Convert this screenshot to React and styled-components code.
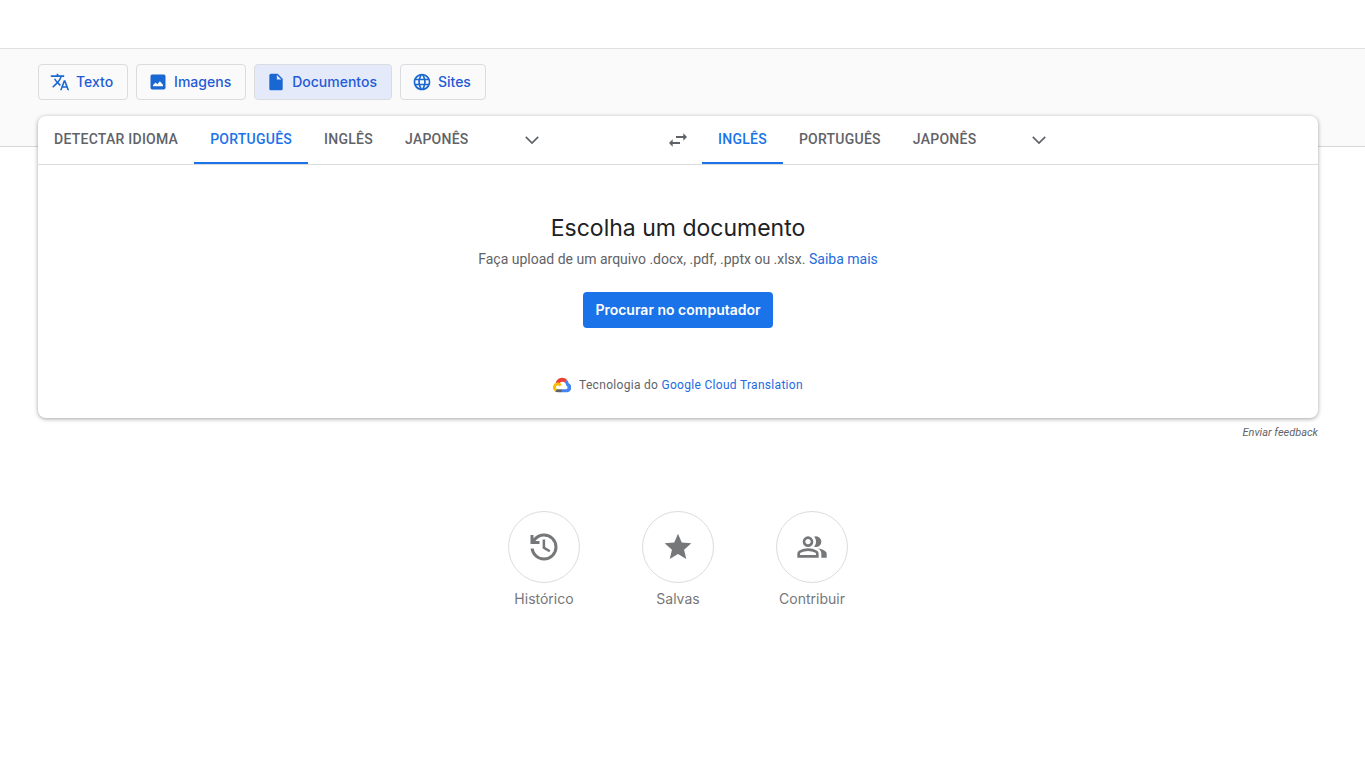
import React from "react";
import styled, { createGlobalStyle } from "styled-components";
import {
  MdTranslate,
  MdInsertDriveFile,
  MdLanguage,
  MdStar,
} from "react-icons/md";

const GlobalStyle = createGlobalStyle`
  * {
    box-sizing: border-box;
  }
  body {
    margin: 0;
    background-color: #ffffff;
    color: #5f6368;
    font-family: Roboto, Arial, Helvetica, sans-serif;
    font-size: 14px;
  }
  button {
    font-family: inherit;
    cursor: pointer;
  }
`;

const Header = styled.header`
  height: 48px;
`;

const Modes = styled.nav`
  display: flex;
  gap: 8px;
  height: 99px;
  padding: 15px 47px 0 38px;
  background-color: #fafafa;
  border-top: 1px solid #e0e0e0;
  border-bottom: 1px solid #d8d8d8;
`;

const ModeButton = styled.button`
  display: flex;
  align-items: center;
  gap: 6px;
  height: 36px;
  padding: 0 14px 0 11px;
  border: 1px solid #dadce0;
  border-radius: 4px;
  background-color: ${(props) => (props.$active ? "#e4eafa" : "transparent")};
  color: #1f5bd6;
  font-family: Inter, Roboto, sans-serif;
  font-size: 14px;
  font-weight: 500;
  line-height: 20px;
  svg {
    width: 20px;
    height: 20px;
    color: #1967d2;
  }
`;

const Main = styled.main`
  padding: 0 47px 0 38px;
  margin-top: -31px;
`;

const Card = styled.section`
  position: relative;
  background-color: #ffffff;
  border-radius: 8px;
  box-shadow: 0 1px 4px rgba(0, 0, 0, 0.37);
`;

const LanguageBar = styled.div`
  display: flex;
  height: 49px;
  border-bottom: 1px solid #dadce0;
`;

const Languages = styled.div`
  display: flex;
  flex: 1;
`;

const Tab = styled.button`
  height: 48px;
  padding: 0 16px;
  border: 0;
  border-bottom: 2px solid
    ${(props) => (props.$active ? "#1a73e8" : "transparent")};
  background: none;
  color: ${(props) => (props.$active ? "#1a73e8" : "#5f6368")};
  font-size: 14px;
  font-weight: 500;
  line-height: 20px;
  letter-spacing: 0.25px;
  white-space: nowrap;
`;

const IconButton = styled.button`
  display: flex;
  align-items: center;
  justify-content: center;
  width: 48px;
  height: 48px;
  padding: 0;
  border: 0;
  background: none;
  color: #5f6368;
  svg {
    width: 24px;
    height: 24px;
  }
`;

const MoreButton = styled(IconButton)`
  margin-left: 23px;
`;

const Upload = styled.div`
  display: flex;
  flex-direction: column;
  align-items: center;
  padding: 47px 16px 24px;
`;

const Title = styled.h1`
  margin: 0;
  color: #202124;
  font-family: Inter, Roboto, sans-serif;
  font-size: 23px;
  font-weight: 400;
  line-height: 32px;
`;

const Hint = styled.p`
  margin: 5px 0 23px;
  line-height: 20px;
`;

const Link = styled.a`
  color: #246bdf;
  text-decoration: none;
`;

const BrowseButton = styled.button`
  height: 36px;
  padding: 0 12px;
  border: 0;
  border-radius: 4px;
  background-color: #1a73e8;
  color: #ffffff;
  font-family: Inter, Roboto, sans-serif;
  font-size: 14px;
  font-weight: 600;
  line-height: 20px;
`;

const Powered = styled.div`
  display: flex;
  align-items: center;
  gap: 8px;
  margin-top: 48px;
  font-size: 12px;
  line-height: 18px;
  letter-spacing: 0.3px;
`;

const Feedback = styled.div`
  padding-top: 7px;
  text-align: right;
  font-size: 11px;
  font-style: italic;
  line-height: 16px;
  a {
    color: #5f6368;
    text-decoration: none;
  }
`;

const Shortcuts = styled.div`
  display: flex;
  justify-content: center;
  gap: 62px;
  margin-top: 70px;
`;

const Shortcut = styled.button`
  display: flex;
  flex-direction: column;
  align-items: center;
  width: 72px;
  padding: 0;
  border: 0;
  background: none;
  color: #757779;
  font-size: 14px;
  line-height: 20px;
  font-family: Inter, Roboto, sans-serif;
  white-space: nowrap;
`;

const Circle = styled.span`
  display: flex;
  align-items: center;
  justify-content: center;
  width: 72px;
  height: 72px;
  margin-bottom: 6px;
  border: 1px solid #dadce0;
  border-radius: 50%;
`;

const ImageIcon = () => (
  <svg viewBox="0 0 24 24" fill="currentColor" aria-hidden="true">
    <path
      fillRule="evenodd"
      d="M5 3h14a2 2 0 0 1 2 2v14a2 2 0 0 1-2 2H5a2 2 0 0 1-2-2V5a2 2 0 0 1 2-2zM6 17.200h12v-2l-3.800-4.200-2.900 3.600-2.100-2.100L6 15.500z"
    />
  </svg>
);

const ChevronIcon = () => (
  <svg viewBox="0 0 24 24" fill="none" aria-hidden="true">
    <path d="M5.800 8.800l6.200 6.200 6.200-6.200" stroke="currentColor" strokeWidth="1.700" />
  </svg>
);

const SwapIcon = () => (
  <svg viewBox="0 0 24 24" fill="currentColor" aria-hidden="true">
    <path d="M6.700 11.300L3 15l3.700 3.700v-2.800H14v-1.800H6.700zM21 9l-3.700-3.700v2.800H10v1.800h7.300v2.800z" />
  </svg>
);

const HistoryIcon = () => (
  <svg width="36" height="36" viewBox="0 -960 960 960" fill="currentColor">
    <path d="M480-120q-138 0-240.500-91.500T122-440h82q14 104 92.500 172T480-200q117 0 198.500-81.500T760-480q0-117-81.500-198.500T480-760q-69 0-129 32t-101 88h110v80H120v-240h80v94q51-64 124.500-99T480-840q75 0 140.500 28.500t114 77q48.500 48.500 77 114T840-480q0 75-28.500 140.500t-77 114q-48.500 48.500-114 77T480-120z" />
    <path d="M617-338L443-442v-238h68v200l141 84z" />
  </svg>
);

const PeopleIcon = () => (
  <svg width="32" height="32" viewBox="0 -960 960 960" fill="currentColor">
    <path d="M40-160v-112q0-34 17.500-62.500T104-378q62-31 126-46.500T360-440q66 0 130 15.500T616-378q29 15 46.500 43.500T680-272v112H40Zm720 0v-120q0-44-24.500-84.500T666-434q51 6 96 20.500t84 35.500q36 20 55 44.500t19 53.500v120H760ZM360-480q-66 0-113-47t-47-113q0-66 47-113t113-47q66 0 113 47t47 113q0 66-47 113t-113 47Zm400-160q0 66-47 113t-113 47q-11 0-28-2.500t-28-5.500q27-32 41.500-71t14.500-81q0-42-14.500-81T544-792q14-5 28-6.500t28-1.500q66 0 113 47t47 113ZM120-240h480v-32q0-11-5.500-20T580-306q-54-27-109-40.500T360-360q-56 0-111 13.500T140-306q-9 5-14.500 14t-5.500 20v32Zm240-320q33 0 56.500-23.500T440-640q0-33-23.500-56.500T360-720q-33 0-56.500 23.500T280-640q0 33 23.500 56.500T360-560Z" />
  </svg>
);

const StarIcon = () => <MdStar size={32} />;

const CloudLogo = () => (
  <svg width="18" height="18" viewBox="0 0 18 18" aria-hidden="true">
    <path
      fill="#ea4335"
      d="M12 6.600l2.200-2.500A6.600 6.600 0 0 0 2.600 7.300l3.800.300a3.700 3.700 0 0 1 5.600-1z"
    />
    <path
      fill="#4285f4"
      d="M15.700 7.300a6.700 6.700 0 0 0-1.700-3.400l-2.300 2.500a3.700 3.700 0 0 1 1.400 3.200 1.900 1.900 0 0 1 0 3.700H8.700v2.900h4.700a4.700 4.700 0 0 0 2.300-8.900z"
    />
    <path
      fill="#5f6368"
      d="M4.900 16.200h4v-2.900h-4a1.900 1.900 0 0 1-.8-.2l-2.200 2.100a4.900 4.900 0 0 0 3 1z"
    />
    <path
      fill="#fbbc04"
      d="M4.900 6.500a4.900 4.900 0 0 0-3 8.800l2.200-2.200a1.900 1.900 0 1 1 2.500-2.500l2.200-2.200a4.900 4.900 0 0 0-3.900-1.900z"
    />
  </svg>
);

const modes = [
  { label: "Texto", icon: MdTranslate },
  { label: "Imagens", icon: ImageIcon },
  { label: "Documentos", icon: MdInsertDriveFile, active: true },
  { label: "Sites", icon: MdLanguage },
];

const shortcuts = [
  { label: "Histórico", icon: HistoryIcon },
  { label: "Salvas", icon: StarIcon },
  { label: "Contribuir", icon: PeopleIcon },
];

const LanguageTabs = ({ items, selected, moreLabel }) => (
  <Languages>
    {items.map((item) => (
      <Tab key={item} $active={item === selected}>
        {item}
      </Tab>
    ))}
    <MoreButton aria-label={moreLabel}>
      <ChevronIcon />
    </MoreButton>
  </Languages>
);

const App = () => {
  return (
    <>
      <GlobalStyle />
      <Header />
      <Modes>
        {modes.map(({ label, icon: Icon, active }) => (
          <ModeButton key={label} $active={active}>
            <Icon />
            {label}
          </ModeButton>
        ))}
      </Modes>
      <Main>
        <Card>
          <LanguageBar>
            <LanguageTabs
              items={["DETECTAR IDIOMA", "PORTUGUÊS", "INGLÊS", "JAPONÊS"]}
              selected="PORTUGUÊS"
              moreLabel="Mais idiomas de origem"
            />
            <IconButton aria-label="Trocar idiomas">
              <SwapIcon />
            </IconButton>
            <LanguageTabs
              items={["INGLÊS", "PORTUGUÊS", "JAPONÊS"]}
              selected="INGLÊS"
              moreLabel="Mais idiomas de destino"
            />
          </LanguageBar>
          <Upload>
            <Title>Escolha um documento</Title>
            <Hint>
              Faça upload de um arquivo .docx, .pdf, .pptx ou .xlsx.{" "}
              <Link href="#saiba-mais">Saiba mais</Link>
            </Hint>
            <BrowseButton>Procurar no computador</BrowseButton>
            <Powered>
              <CloudLogo />
              <span>
                Tecnologia do <Link href="#cloud">Google Cloud Translation</Link>
              </span>
            </Powered>
          </Upload>
        </Card>
        <Feedback>
          <a href="#feedback">Enviar feedback</a>
        </Feedback>
        <Shortcuts>
          {shortcuts.map(({ label, icon: Icon }) => (
            <Shortcut key={label}>
              <Circle>
                <Icon />
              </Circle>
              {label}
            </Shortcut>
          ))}
        </Shortcuts>
      </Main>
    </>
  );
};

export default App;
